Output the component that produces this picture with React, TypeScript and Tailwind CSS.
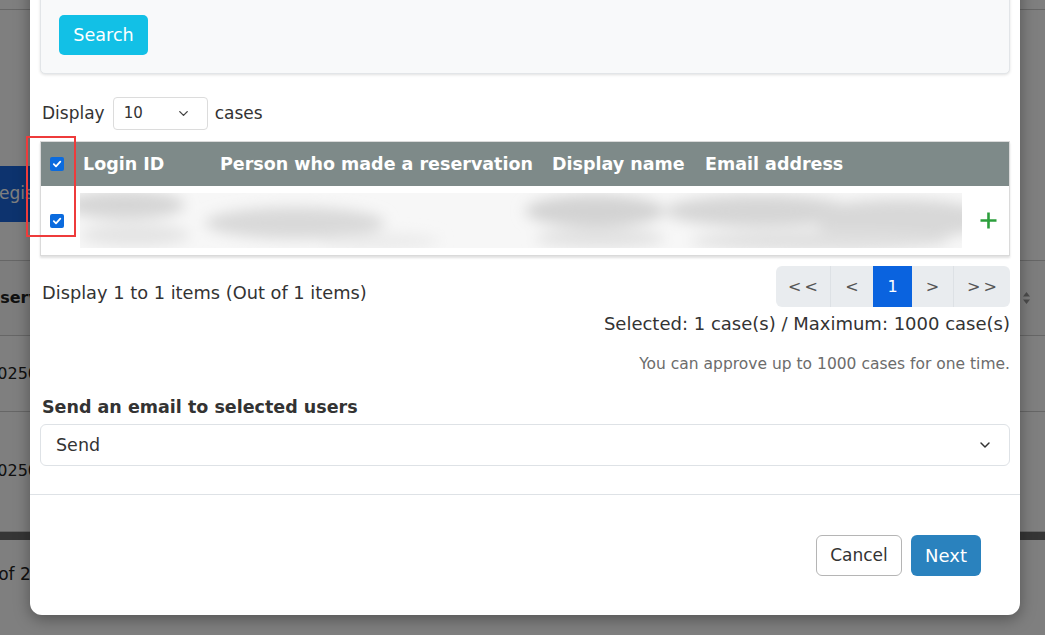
import { ChevronDown } from "lucide-react";

const font = "font-['DejaVu_Sans',Verdana,sans-serif]";

function Check() {
  return (
    <span className="w-[14px] h-[14px] rounded-[2px] bg-[#0b6bde] flex items-center justify-center">
      <svg width="10" height="10" viewBox="0 0 10 10">
        <path d="M1.8 5.2 L4 7.3 L8.3 2.6" fill="none" stroke="#fff" strokeWidth="1.8" strokeLinecap="round" strokeLinejoin="round" />
      </svg>
    </span>
  );
}

function BlurredRow() {
  return (
    <svg width="882" height="55" viewBox="0 0 882 55" className="block">
      <defs>
        <filter id="bl" x="-20%" y="-50%" width="140%" height="200%">
          <feGaussianBlur stdDeviation="7" />
        </filter>
        <clipPath id="cl">
          <rect width="882" height="55" />
        </clipPath>
      </defs>
      <rect width="882" height="55" fill="#f7f7f7" />
      <g filter="url(#bl)" clipPath="url(#cl)">
        <ellipse cx="45" cy="12" rx="60" ry="14" fill="#d6d6d6" />
        <ellipse cx="55" cy="42" rx="55" ry="11" fill="#e4e4e4" />
        <ellipse cx="215" cy="30" rx="90" ry="16" fill="#d9d9d9" />
        <ellipse cx="300" cy="48" rx="60" ry="8" fill="#ebebeb" />
        <ellipse cx="515" cy="18" rx="70" ry="16" fill="#d3d3d3" />
        <ellipse cx="520" cy="45" rx="65" ry="10" fill="#e2e2e2" />
        <ellipse cx="680" cy="18" rx="95" ry="16" fill="#d6d6d6" />
        <ellipse cx="820" cy="26" rx="90" ry="20" fill="#d8d8d8" />
        <ellipse cx="740" cy="48" rx="130" ry="10" fill="#e0e0e0" />
      </g>
    </svg>
  );
}

export default function App() {
  return (
    <div className={`relative w-[1045px] h-[635px] overflow-hidden bg-white text-[#222] ${font}`}>
      {/* page behind the dialog */}
      <div className="h-[10px] border-b border-[#ccc]" />
      <div className="mt-[156px] ml-[-24px] w-[150px] h-[56px] bg-[#1a66dc] text-white text-[17px] flex items-center pl-[12px]">
        Register
      </div>
      <div className="mt-[38px] border-t border-[#ccc] h-[75px] flex items-center justify-between bg-[#fafafa]">
        <span className="ml-[-23px] font-bold text-[16px]">Reservation</span>
        <span className="mr-[14px] flex flex-col items-center">
          <svg width="9" height="14" viewBox="0 0 9 14">
            <path d="M4.5 1 L8 5.5 H1 Z M4.5 13 L8 8.5 H1 Z" fill="#999" />
          </svg>
        </span>
      </div>
      <div className="border-t border-[#ccc] h-[76px] flex items-center">
        <span className="ml-[-24px] text-[16px]">R20250101</span>
      </div>
      <div className="border-t border-[#ccc] h-[118px] flex items-center">
        <span className="ml-[-24px] text-[16px]">R20250102</span>
      </div>
      <div className="border-t border-[#ccc] mt-[2px] h-[9px] bg-[#6a6a6a]" />
      <div className="mt-[22px] ml-[-18px] text-[17px]">1 of 2</div>

      {/* overlay */}
      <div className="absolute inset-0 bg-black/50" />

      {/* annotation */}
      <div className="absolute left-[26px] top-[136px] w-[50px] h-[101px] border-2 border-[#ee3b3b] z-20" />

      {/* dialog */}
      <div className="absolute left-[30px] top-[-30px] w-[990px] bg-white rounded-b-[12px] shadow-[0_4px_16px_rgba(0,0,0,0.35)] z-10 text-[#333]">
        <div className="px-[10px] pt-[10px] pb-[28px]">
          <div className="rounded-[5px] border border-[#e2e5e8] bg-[#f8f9fa] shadow-[0_1px_3px_rgba(0,0,0,0.12)] pt-[34px] pb-[18px] pl-[18px]">
            <button className="h-[40px] w-[89px] rounded-[5px] bg-[#12c0e6] text-white text-[17.6px]">Search</button>
          </div>

          <div className="mt-[23px] h-[33px] flex items-center text-[17px]">
            <span className="ml-[2px]">Display</span>
            <div className="ml-[8px] w-[95px] h-[33px] border border-[#dcdcdc] rounded-[4px] flex items-center justify-between pl-[10px] pr-[16px] text-[15px]">
              <span>10</span>
              <ChevronDown size={15} strokeWidth={2.2} className="text-[#444]" />
            </div>
            <span className="ml-[7px]">cases</span>
          </div>

          <div className="mt-[11px] border border-[#dadada] shadow-[0_2px_2px_rgba(0,0,0,0.12)]">
            <div className="h-[44px] bg-[#7e8a89] flex items-center text-white font-bold text-[17.5px]">
              <div className="w-[32px] pl-[9px] flex items-center"><Check /></div>
              <div className="w-[137px] pl-[10px]">Login ID</div>
              <div className="w-[332px] pl-[10px]">Person who made a reservation</div>
              <div className="w-[153px] pl-[10px]">Display name</div>
              <div className="pl-[10px]">Email address</div>
            </div>
            <div className="h-[69px] flex items-center">
              <div className="w-[39px] pl-[9px] flex items-center"><Check /></div>
              <BlurredRow />
              <div className="flex-1 flex justify-center pl-[6px]">
                <svg width="19" height="19" viewBox="0 0 19 19">
                  <path d="M9.5 1.5 V17.5 M1.5 9.5 H17.5" stroke="#2c9f3c" strokeWidth="2.6" />
                </svg>
              </div>
            </div>
          </div>

          <div className="mt-[10px] flex justify-between items-start">
            <span className="mt-[14px] ml-[2px] text-[17.8px]">Display 1 to 1 items (Out of 1 items)</span>
            <div className="h-[41px] flex rounded-[6px] bg-[#e9ecef] overflow-hidden text-[16px] text-[#555]">
              <div className="w-[55px] flex items-center justify-center border-r border-[#dde1e5] tracking-[3px] pl-[3px]">&lt;&lt;</div>
              <div className="w-[42px] flex items-center justify-center">&lt;</div>
              <div className="w-[39px] flex items-center justify-center bg-[#0a63df] text-white">1</div>
              <div className="w-[42px] flex items-center justify-center border-r border-[#dde1e5]">&gt;</div>
              <div className="w-[56px] flex items-center justify-center tracking-[3px] pl-[3px]">&gt;&gt;</div>
            </div>
          </div>

          <div className="mt-[5px] text-right text-[18px] leading-[24px]">Selected: 1 case(s) / Maximum: 1000 case(s)</div>
          <div className="mt-[17px] text-right text-[15.5px] leading-[22px] text-[#6c6c6c]">You can approve up to 1000 cases for one time.</div>

          <div className="mt-[20px] ml-[2px] font-bold text-[17.5px] leading-[24px]">Send an email to selected users</div>
          <div className="mt-[5px] h-[42px] border border-[#dee2e6] rounded-[6px] flex items-center justify-between pl-[15px] pr-[16px] text-[17.5px]">
            <span>Send</span>
            <ChevronDown size={16} strokeWidth={2.2} className="text-[#333]" />
          </div>
        </div>

        <div className="border-t border-[#dee2e6] pt-[40px] pb-[39px] pr-[39px] flex justify-end gap-[9px]">
          <button className="w-[86px] h-[41px] rounded-[6px] border border-[#b5b5b5] bg-white text-[17px] text-[#333]">Cancel</button>
          <button className="w-[70px] h-[41px] rounded-[6px] bg-[#2a82be] text-white text-[18px]">Next</button>
        </div>
      </div>
    </div>
  );
}
